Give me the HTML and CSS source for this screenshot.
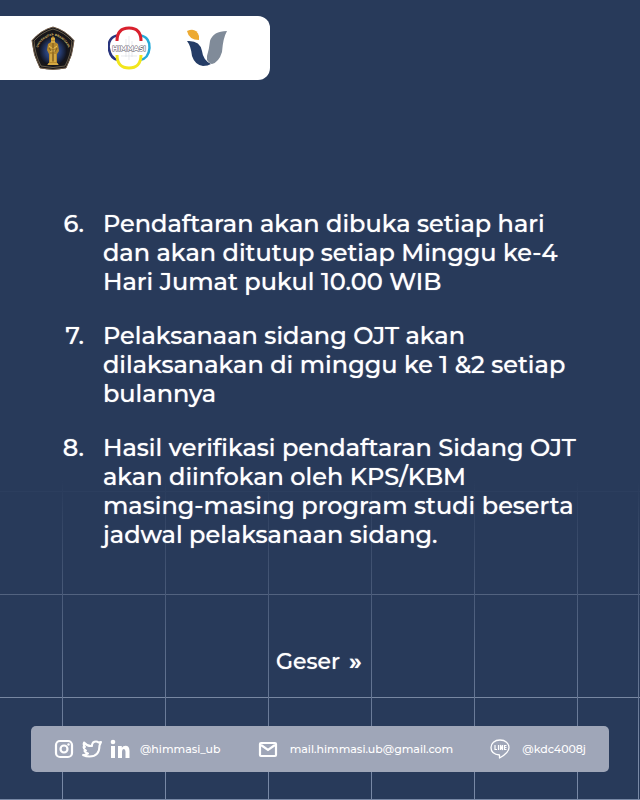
FILE: index.html
```html
<!DOCTYPE html>
<html lang="id">
<head>
<meta charset="utf-8">
<meta name="viewport" content="width=device-width, initial-scale=1">
<title>Pendaftaran Sidang OJT</title>
<link rel="stylesheet" href="styles.css">
</head>
<body>
<header class="logos">
  <svg class="logo" viewBox="0 0 44 44" role="img">
    <defs>
      <radialGradient id="crest"><stop offset="0" stop-color="#4866a8"/><stop offset=".55" stop-color="#263c70"/><stop offset="1" stop-color="#11121a"/></radialGradient>
      <path id="crest-arc" d="M6 28 Q6 14 22 9 Q38 14 38 28"/>
    </defs>
    <path d="M22 1Q34 4 43 14.500Q42 29 35 42Q22 45 9 42Q2 29 1 14.500Q10 4 22 1Z" fill="#17161a" stroke="#75604b"/>
    <path d="M22 3Q33 6 41 15Q40 29 34 40Q22 43 10 40Q4 29 3 15Q11 6 22 3Z" fill="none" stroke="#b4a077" stroke-width=".5"/>
    <ellipse cx="22" cy="25" rx="14" ry="15" fill="url(#crest)"/>
    <text class="crest-text"><textPath href="#crest-arc" startOffset="50%">UNIVERSITAS BRAWIJAYA</textPath></text>
    <path d="M20 12l2-2 2 2v4l3 2 1 7-2 3v9l2 2H16l2-2v-9l-2-4 1-6 3-2z" fill="#b88a2c"/>
    <path d="M20 13h4M20 16h4M18 20l4 3 4-3M19 25h6M20 28v8M24 28v8M17 38h10" fill="none" stroke="#f0c65a" stroke-width="1"/>
    <path d="M22 17v18M18 22l2 3M26 22l-2 4" stroke="#5b431c" stroke-width=".7"/>
  </svg>
  <svg class="logo" viewBox="0 0 44 44" role="img">
    <g fill="none" stroke-width="2.500">
      <path d="M10 9.500C3 10 0 16 .8 22S4 33 10 34" stroke="#29357e"/>
      <path d="M32 9.500C39 10 42 16 41.500 22S38 33 32 34" stroke="#24aad8"/>
      <path d="M9 15C9 5 14 2 21 2s12 3 12 13" stroke="#d9202d" stroke-width="3"/>
      <path d="M9 29C9 38 14 42 21 42s12-4 12-13" stroke="#f2e61c" stroke-width="3"/>
    </g>
    <path d="M18 13v18M21 10v24M24 15v16M13 30h16" stroke="#d9dce3" stroke-width=".6"/>
    <text x="21" y="25" class="himasi-text">HIMMASI</text>
  </svg>
  <svg class="logo" viewBox="0 0 44 44" role="img">
    <path d="M2 5Q11 1 14 10V14Q4 14 2 5Z" fill="#edaa32"/>
    <path d="M2 15Q15 14 17 25Q18 34 26 38Q23 40 18 40Q10 39 7 30Q6 20 2 15Z" fill="#253d67"/>
    <path d="M42 5Q28 5 25 15Q24 24 22 30L22 34Q25 38 27 38Q34 36 37 26Q38 12 42 5Z" fill="#808b99"/>
  </svg>
</header>
<main class="content">
  <ol class="rules">
    <li><span class="number">6.</span><p>Pendaftaran akan dibuka setiap hari<br>dan akan ditutup setiap Minggu ke-4<br>Hari Jumat pukul 10.00 WIB</p></li>
    <li><span class="number">7.</span><p>Pelaksanaan sidang OJT akan<br>dilaksanakan di minggu ke 1 &amp;2 setiap<br>bulannya</p></li>
    <li><span class="number">8.</span><p>Hasil verifikasi pendaftaran Sidang OJT<br>akan diinfokan oleh KPS/KBM<br>masing-masing program studi beserta<br>jadwal pelaksanaan sidang.</p></li>
  </ol>
  <p class="swipe">Geser <span class="arrows">»</span></p>
</main>
<footer class="contacts">
  <div class="contact social">
    <svg class="icon" viewBox="0 0 20 20"><rect x="2" y="2" width="16" height="16" rx="4" fill="none" stroke="#fff" stroke-width="2.200"/><circle cx="10" cy="10" r="3.500" fill="none" stroke="#fff" stroke-width="2.200"/><circle cx="14.500" cy="5.500" r="1.200" fill="#fff"/></svg>
    <svg class="icon" viewBox="0 0 20 20"><path d="M2 3.500Q5.500 7.500 10 7V6Q10.500 2.500 14 2.500Q15.500 2.500 16.500 3.500L19 3L17.500 6.500Q17.500 17.500 7.500 17.500Q4 17.500 1 16Q4.500 16 6 14.500Q3.500 14 2.500 12L4 11.500Q1.500 10 1.500 8L3 8Q1 6 2 3.500Z" fill="none" stroke="#fff" stroke-width="2" stroke-linejoin="round"/></svg>
    <svg class="icon" viewBox="0 0 20 20" fill="#fff"><circle cx="3" cy="3" r="2.300"/><path d="M1 7h4v12H1zM8 7h3.800v1.700Q13 6.700 15.500 6.700Q19.500 6.700 19.500 12v7h-4v-6.200Q15.500 10 13.700 10Q12 10 12 12.800V19H8z"/></svg>
    <span class="handle">@himmasi_ub</span>
  </div>
  <div class="contact mail">
    <svg class="icon" viewBox="0 0 20 20"><rect x="2" y="4" width="16" height="13" rx="1" fill="none" stroke="#fff" stroke-width="2.200"/><path d="M3 6l7 5 7-5" fill="none" stroke="#fff" stroke-width="2.200"/></svg>
    <span>mail.himmasi.ub@gmail.com</span>
  </div>
  <div class="contact line">
    <svg class="icon" viewBox="0 0 20 20"><path d="M10 1C4.500 1 1 4.500 1 8.500C1 12.500 4 15.500 9.500 16V19C15 16 19 12.500 19 8.500C19 4.500 15.500 1 10 1Z" fill="none" stroke="#fff" stroke-width="1.300" stroke-linejoin="round"/><path d="M5 6v4.500h2M8.500 6v5M10.500 11V6l2 5V6M16.500 6.500h-2v4h2M14.500 8.500h2" fill="none" stroke="#fff" stroke-width="1.200"/></svg>
    <span>@kdc4008j</span>
  </div>
</footer>
</body>
</html>
```
FILE: styles.css
```css
* { box-sizing: border-box; }

body {
  margin: 0;
  min-height: 100vh;
  padding: 16px 0 28px;
  display: flex;
  flex-direction: column;
  color: #fff;
  font-family: Montserrat, Inter, sans-serif;
  font-weight: 500;
  background-color: #283a5a;
  background-image:
    linear-gradient(#283a5a 60%, transparent 95%),
    linear-gradient(#7888a5, #7888a5),
    linear-gradient(#7888a5, #7888a5),
    linear-gradient(to right, #7888a5 1px, transparent 1px),
    linear-gradient(to top, #8f9db6 1px, transparent 1px);
  background-size: 100% 100%, 1px 100%, 100% 1px, 103px 100%, 100% 103px;
  background-position: 0 0, right 1px top 0, 0 100%, 62px 0, left 0 bottom -1px;
  background-repeat: no-repeat, no-repeat, no-repeat, repeat-x, repeat-y;
}

p { margin: 0; }

.logos {
  display: flex;
  align-items: center;
  align-self: flex-start;
  gap: 33px;
  height: 64px;
  padding: 0 41px 0 31px;
  border-radius: 0 12px 12px 0;
  background: #fff;
}
.logo { width: 44px; height: 44px; }
.crest-text { font-size: 3px; font-weight: 700; fill: #d0b56b; text-anchor: middle; }
.himasi-text {
  font-size: 7px;
  font-weight: 700;
  text-anchor: middle;
  fill: #fff;
  stroke: #6d6873;
  stroke-width: 1px;
  paint-order: stroke;
}

.content {
  flex: 1;
  display: flex;
  flex-direction: column;
  padding: 129px 40px 0 60px;
  text-shadow: 0 0 1px rgba(255, 255, 255, 0.7);
}
.rules {
  display: grid;
  gap: 25px;
  margin: 0;
  padding: 0;
  list-style: none;
  font-size: 24px;
  line-height: 29px;
}
.rules li { display: grid; grid-template-columns: 24px 1fr; gap: 19px; }
.number { text-align: right; }
.rules p { white-space: nowrap; }
.swipe {
  display: flex;
  justify-content: center;
  gap: 9px;
  margin-top: 100px;
  padding-right: 22px;
  font-size: 22px;
  line-height: 26px;
}
.arrows { font-size: 24px; font-weight: 600; }

.contacts {
  display: flex;
  align-items: center;
  justify-content: space-between;
  height: 46px;
  margin: 0 31px;
  padding: 0 23px;
  border-radius: 5px;
  background: #9fa6b8;
  font-size: 11px;
}
.contact { display: flex; align-items: center; gap: 12px; }
.social { gap: 8px; }
.handle { margin-left: 2px; }
.icon { width: 20px; height: 20px; }
```
